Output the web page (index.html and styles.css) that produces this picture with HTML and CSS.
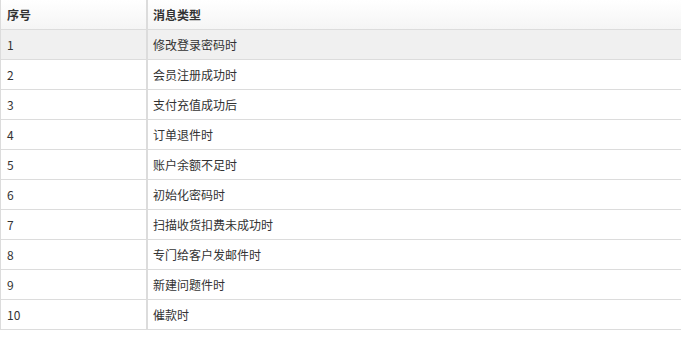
FILE: index.html
```html
<!DOCTYPE html>
<html lang="zh-CN">
<head>
<meta charset="utf-8">
<title>消息类型</title>
<link rel="stylesheet" href="styles.css">
</head>
<body>
<table class="grid">
  <colgroup>
    <col class="col-no">
    <col class="col-type">
  </colgroup>
  <thead>
    <tr><th class="c-no">序号</th><th class="c-type">消息类型</th></tr>
  </thead>
  <tbody>
    <tr class="active"><td class="c-no">1</td><td class="c-type">修改登录密码时</td></tr>
    <tr><td class="c-no">2</td><td class="c-type">会员注册成功时</td></tr>
    <tr><td class="c-no">3</td><td class="c-type">支付充值成功后</td></tr>
    <tr><td class="c-no">4</td><td class="c-type">订单退件时</td></tr>
    <tr><td class="c-no">5</td><td class="c-type">账户余额不足时</td></tr>
    <tr><td class="c-no">6</td><td class="c-type">初始化密码时</td></tr>
    <tr><td class="c-no">7</td><td class="c-type">扫描收货扣费未成功时</td></tr>
    <tr><td class="c-no">8</td><td class="c-type">专门给客户发邮件时</td></tr>
    <tr><td class="c-no">9</td><td class="c-type">新建问题件时</td></tr>
    <tr><td class="c-no">10</td><td class="c-type">催款时</td></tr>
  </tbody>
</table>
</body>
</html>
```
FILE: styles.css
```css
html, body {
  margin: 0;
  padding: 0;
  background: #fff;
}
body {
  font-family: "Noto Sans CJK SC", "Liberation Sans", sans-serif;
  font-size: 12px;
  color: #333;
}
.grid {
  width: 682px;
  border-collapse: separate;
  border-spacing: 0;
  table-layout: fixed;
}
.col-no { width: 148px; }
.grid th, .grid td {
  height: 29px;
  padding: 0 0 0 6px;
  text-align: left;
  vertical-align: middle;
  border-bottom: 1px solid #dcdcdc;
  white-space: nowrap;
  line-height: 29px;
}
.grid th {
  font-weight: bold;
  color: #333;
  background: linear-gradient(#ffffff, #f5f5f5);
}
.grid .c-no {
  border-left: 1px solid #dcdcdc;
  border-right: 2px solid #dcdcdc;
  padding-left: 6px;
}
.grid .c-type {
  padding-left: 5px;
}
.grid tr.active td {
  background: #f0f0f0;
}
```
